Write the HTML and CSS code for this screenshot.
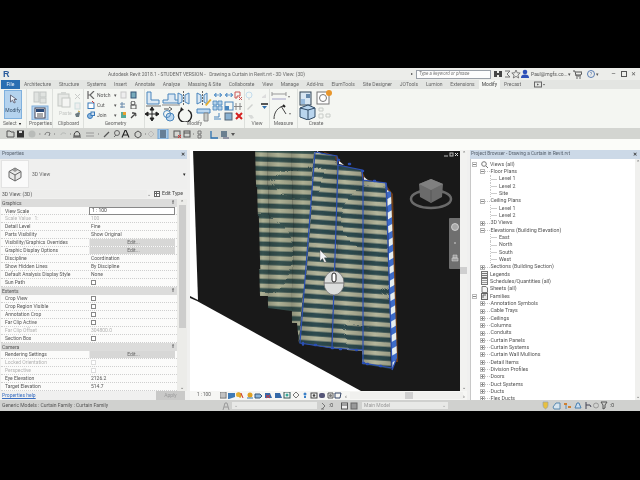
FILE: index.html
```html
<!DOCTYPE html>
<html lang="en">
<head>
<meta charset="utf-8">
<title>Autodesk Revit 2018.1</title>
<link rel="stylesheet" href="styles.css">
</head>
<body>
<div class="app">
  <header class="titlebar">
    <span class="logo">R</span>
    <span class="doc">Autodesk Revit 2018.1 - STUDENT VERSION -&nbsp;&nbsp;&nbsp;Drawing a Curtain in Revit.rvt - 3D View: (3D)</span>
    <span class="sarrow">▸</span>
    <span class="search">Type a keyword or phrase</span>
    <svg class="ticons" width="34" height="10" viewBox="0 0 34 10">
      <path d="M1 2h3v6H1zM6 2h3v6H6zM4 4h2v2H4z" fill="#444"/>
      <path d="M12 2h5l-3 3 3 3h-5" fill="none" stroke="#777"/>
      <path d="M23 1l1.200 2.800 3 .2-2.300 2 .8 3-2.700-1.600L20.300 9l.8-3-2.300-2 3-.2z" fill="none" stroke="#666" stroke-width=".8"/>
    </svg>
    <svg class="user" width="8" height="10" viewBox="0 0 8 10"><circle cx="4" cy="3" r="2.300" fill="#2d50b8"/><path d="M0 9c0-3 2-3.500 4-3.500S8 6 8 9z" fill="#2d50b8"/></svg>
    <span class="account">Paul@mgfs.co...</span><span class="caret">▾</span>
    <svg class="cart" width="9" height="9" viewBox="0 0 9 9"><path d="M0 1h2l1 5h5M3 2h6L8 5H3" fill="none" stroke="#555"/><circle cx="4" cy="8" r=".8" fill="#555"/><circle cx="7" cy="8" r=".8" fill="#555"/></svg>
    <span class="help">?</span><span class="caret">▾</span>
    <span class="winbtn min">–</span><span class="winbtn box"></span><span class="winbtn x">✕</span>
  </header>

  <nav class="tabs">
    <span class="tab file">File</span>
    <span class="tab t1">Architecture</span><span class="tab">Structure</span><span class="tab">Systems</span><span class="tab">Insert</span><span class="tab">Annotate</span><span class="tab">Analyze</span><span class="tab">Massing &amp; Site</span><span class="tab">Collaborate</span><span class="tab">View</span><span class="tab">Manage</span><span class="tab">Add-Ins</span><span class="tab">ElumTools</span><span class="tab">Site Designer</span><span class="tab">JOTools</span><span class="tab">Lumion</span><span class="tab">Extensions</span>
    <span class="tab active">Modify</span><span class="tab">Precast</span>
    <svg class="tabicon" width="11" height="7" viewBox="0 0 11 7"><rect x=".5" y="1" width="7" height="5" fill="none" stroke="#666"/><path d="M3 2.500l2 1-2 1zM9 3h2l-1 1.500z" fill="#555"/></svg>
  </nav>

  <section class="ribbon">
    <div class="group g-select">
      <div class="gbody"><div class="modifybtn">
        <svg width="9" height="10" viewBox="0 0 9 10"><path d="M1.500 1v7l2-1.800L5 9l1.300-.6L5 5.500h2.700z" fill="#e8f0f8" stroke="#556" stroke-width=".8"/></svg>
        <span>Modify</span></div></div>
      <div class="glabel">Select <b>▾</b></div>
    </div>
    <div class="group g-props">
      <div class="gbody"><svg width="22" height="30" viewBox="0 0 22 30">
        <rect x="5" y="2" width="5" height="10" fill="#e0e3e0" stroke="#c2c6c4"/><rect x="11" y="2" width="6" height="5" fill="#e0e3e0" stroke="#c2c6c4"/><rect x="11" y="8" width="6" height="5" fill="#e0e3e0" stroke="#c2c6c4"/>
        <rect x="3" y="16" width="16" height="14" fill="#b9d5ee" stroke="#80aedb"/><rect x="6" y="18" width="10" height="10" fill="#fff" stroke="#445"/><rect x="7" y="19" width="8" height="3" fill="#2a4a78"/><path d="M8 24h6M8 26h6" stroke="#555"/>
      </svg></div>
      <div class="glabel">Properties</div>
    </div>
    <div class="group g-clip">
      <div class="gbody"><svg width="29" height="30" viewBox="0 0 29 30">
        <rect x="4" y="4" width="11" height="12" fill="#e7e9e6" stroke="#c4c7c4"/><rect x="7" y="2" width="5" height="3" fill="#d4d7d4"/><rect x="8" y="8" width="8" height="9" fill="#f4f5f3" stroke="#c4c7c4"/>
        <text class="faint" x="5" y="25">Paste</text>
        <path d="M21 4l5 5M26 4l-5 5" stroke="#c8cac8"/><rect x="21" y="13" width="5" height="6" fill="#eee" stroke="#cdd"/>
        <path d="M21 24l4-2 1 1-1 4-3 0z" fill="#6b7a80"/><path d="M24 21l2 1" stroke="#c8a030"/>
      </svg></div>
      <div class="glabel">Clipboard</div>
    </div>
    <div class="group g-geo">
      <div class="geo">
        <div class="georow"><svg width="8" height="8" viewBox="0 0 8 8"><path d="M1 0v8M7 0L3 4l4 4M3 4H1" fill="none" stroke="#666" stroke-width="1.200"/></svg><span class="gt">Notch</span><span class="caret">▾</span><svg width="18" height="8" viewBox="0 0 18 8"><rect x="1" y="1" width="5" height="6" fill="#eee" stroke="#c8c8c8"/><rect x="11" y="1" width="5" height="6" fill="#7ab" stroke="#357"/></svg></div>
        <div class="georow"><svg width="8" height="8" viewBox="0 0 8 8"><rect x="1" y="2" width="6" height="5.500" fill="#fff" stroke="#3a7ab8"/><path d="M5 0l2 2" stroke="#c33"/></svg><span class="gt">Cut</span><span class="caret">▾</span><svg class="pushr" width="18" height="8" viewBox="0 0 18 8"><path d="M2 1v6M0 3h5M0 6h5" stroke="#68a"/><circle cx="13" cy="2" r="2" fill="none" stroke="#555"/><rect x="11" y="4" width="5" height="4" fill="none" stroke="#555"/></svg></div>
        <div class="georow"><svg width="8" height="8" viewBox="0 0 8 8"><circle cx="3" cy="5" r="2.500" fill="#8db8e0" stroke="#3a7ab8"/><rect x="4" y="1" width="3.500" height="3.500" fill="#cfe0f0" stroke="#3a7ab8"/></svg><span class="gt">Join</span><span class="caret">▾</span><svg class="pushr" width="18" height="8" viewBox="0 0 18 8"><path d="M1 1h5v6H1z" fill="#5a9"/><path d="M3 1h3v3H3z" fill="#e8a030"/><path d="M11 7l5-5M12 2l2 0 2 2-1 1" stroke="#444" stroke-width="1.300" fill="none"/></svg></div>
      </div>
      <div class="glabel">Geometry</div>
    </div>
    <div class="group g-mod">
      <div class="gbody"><svg width="100" height="32" viewBox="0 0 100 32">
        <path d="M2 2h4v8h8v4H2z" fill="#dbe8f3" stroke="#4a86bd"/><path d="M1 16h15" stroke="#666"/>
        <path d="M18 13h16v-3h-4V4h-7v6h-5z" fill="#dbe8f3" stroke="#4a86bd"/><path d="M17 15h18" stroke="#888"/>
        <path d="M33 3l4 2v7l-4 2zM44 3l-4 2v7l4 2z" fill="#dbe8f3" stroke="#4a86bd"/><path d="M38.500 1v15" stroke="#666" stroke-dasharray="2 1"/>
        <path d="M52 3l4 2v7l-4 2zM62 3l-3 2v7l3 2z" fill="#dbe8f3" stroke="#4a86bd"/><path d="M57.500 1v15" stroke="#666" stroke-dasharray="2 1"/><path d="M60 15l5-6 1.500 1-5 6z" fill="#e8b030"/>
        <path d="M7 18v12M1 24h12M7 17l-2 3h4zM7 31l-2-3h4zM0 24l3-2v4zM14 24l-3-2v4z" fill="#222" stroke="#222"/>
        <path d="M19 19h5M24 17l3 2-3 2" fill="none" stroke="#555"/><circle cx="25" cy="27" r="4" fill="#bcd7ef" stroke="#4a86bd"/><circle cx="22" cy="24" r="3.500" fill="none" stroke="#4a86bd"/>
        <path d="M43 20a6.500 6.500 0 1 1-6 0" fill="none" stroke="#222" stroke-width="1.400"/><path d="M36 17l3 3-4 1z" fill="#222"/>
        <path d="M52 19h13v4H52z" fill="#bcd7ef" stroke="#4a86bd"/><path d="M59 23h4v8h-4z" fill="#c9cdca" stroke="#888"/>
        <path d="M70 5h4M76 5h-1M69 5l2-2v4zM77 5l-2-2v4z" fill="#6a9ecd" stroke="#6a9ecd"/><path d="M81 5h4M87 5h-1M80 5l2-2v4zM88 5l-2-2v4z" fill="#6a9ecd" stroke="#6a9ecd"/>
        <path d="M90 2h5v4h-3v2h-2zM94 7l3 3M97 7l-3 3" stroke="#c55" fill="none"/>
        <path d="M68 11h4v4h-4zM73 11h4v4h-4zM68 16h4v4h-4zM73 16h4v4h-4z" fill="#b4d2ea" stroke="#4a86bd" stroke-width=".8"/>
        <rect x="80" y="12" width="8" height="8" fill="none" stroke="#4a86bd"/><path d="M80 16h4v4h-4z" fill="#4a86bd"/><path d="M91 13v7M95 13v7M89 16.500h8" stroke="#888"/>
        <path d="M69 27h5v-4M76 29h-7" fill="none" stroke="#4a86bd"/><rect x="80" y="23" width="7" height="7" fill="#8ab2d2" stroke="#567"/><path d="M91 23l6 6M97 23l-6 6" stroke="#d42020" stroke-width="2"/>
      </svg></div>
      <div class="glabel">Modify</div>
    </div>
    <div class="group g-view">
      <div class="gbody"><svg width="24" height="30" viewBox="0 0 24 30">
        <circle cx="4" cy="5" r="3" fill="none" stroke="#c3ddee"/><path d="M3 9h2" stroke="#ccc"/><path d="M17 7l4-3v4h-4z" fill="#ddd"/>
        <path d="M2 19l5-5 1 1-5 5z" fill="#cfd2cf"/><rect x="16" y="13" width="7" height="2" fill="#555"/><path d="M17 16h5l-2.500 3z" fill="#2f6fae"/>
        <path d="M3 25l4 0 2 3-3 1z" fill="#d9dbd9"/>
      </svg></div>
      <div class="glabel">View</div>
    </div>
    <div class="group g-meas">
      <div class="gbody"><svg width="26" height="30" viewBox="0 0 26 30">
        <path d="M2 4h14M2 2v4M16 2v4" stroke="#999"/><rect x="2" y="8" width="14" height="2" fill="#ccd"/><path d="M18 6h2l-1 2zM19 23h2l-1 2z" fill="#777"/>
        <path d="M4 29c0-7 4-12 10-13M11 16l5 8" fill="none" stroke="#444"/><path d="M13 15l2 2" stroke="#222" stroke-width="2"/>
      </svg></div>
      <div class="glabel">Measure</div>
    </div>
    <div class="group g-create">
      <div class="gbody"><svg width="36" height="30" viewBox="0 0 36 30">
        <rect x="2" y="2" width="11" height="13" fill="#d8e6f2" stroke="#345"/><rect x="8" y="4" width="4" height="4" fill="#68a"/><rect x="3" y="9" width="4" height="5" fill="#9bd"/>
        <rect x="19" y="2" width="12" height="12" fill="#fff" stroke="#777"/><circle cx="25" cy="8" r="3.500" fill="none" stroke="#777"/><circle cx="31" cy="3" r="3" fill="#e8962c"/>
        <path d="M2 18l8-3 7 3v9l-7 3-8-3z" fill="#b9d5ee" stroke="#2f4a66"/><path d="M10 20l7-2M10 20l-8-2M10 20v10" stroke="#2f4a66"/>
        <path d="M21 18h4v3h-4zM28 24h4v3h-4zM21 24h4v4h-4z" fill="none" stroke="#c8ccc8"/>
      </svg></div>
      <div class="glabel">Create</div>
    </div>
  </section>

  <div class="qat">
    <svg width="250" height="10" viewBox="0 0 250 10">
      <path d="M3 2h3l1 1h3v5H3z" fill="none" stroke="#555"/><rect x="13" y="1.500" width="7" height="7" fill="#333"/><rect x="15" y="2" width="3" height="2" fill="#ddd"/>
      <circle cx="28" cy="5" r="3.500" fill="#b9bcb9"/><path d="M35 5h1.500" stroke="#888"/><path d="M41 6c0-3 3-3 5-2l-1 3" fill="none" stroke="#777"/><path d="M50 5h1" stroke="#777"/><path d="M57 6c0-2 3-3 5-1" fill="none" stroke="#b5b8b5"/><path d="M66 5h1" stroke="#777"/>
      <path d="M70 7c0-6 6-6 6 0zM69 8h8" fill="none" stroke="#444"/><path d="M82 4h8M82 7h8" stroke="#999"/><path d="M94 5h1" stroke="#777"/>
      <path d="M100 8l5-5" stroke="#555" stroke-width="1.200"/><circle cx="113" cy="4" r="2.500" fill="none" stroke="#666"/><path d="M110 8l2-2" stroke="#666"/>
      <path d="M118 8.500l3-7h1l3 7M119.500 6h4" fill="none" stroke="#222" stroke-width="1.100"/>
      <path d="M131 4l3-2 3 2v3l-3 2-3-2z" fill="none" stroke="#555"/><path d="M141 5h1" stroke="#777"/><path d="M147 2l3 3-3 3-3-3z" fill="none" stroke="#bbb"/>
      <rect x="154" y="0" width="10" height="10" fill="#a9cbe8" stroke="#6ea2d4"/><path d="M156 2h6M156 4h6M156 6h6M156 8h6" stroke="#234"/>
      <rect x="170" y="2" width="6" height="6" fill="none" stroke="#555"/><path d="M174 6l3 3M177 6l-3 3" stroke="#d33"/><rect x="180" y="2" width="6" height="6" fill="none" stroke="#555"/><path d="M180 4h6" stroke="#555"/><path d="M189 5h1" stroke="#777"/>
      <path d="M194 2h3v3h-3zM194 6h3v3h-3z" fill="none" stroke="#777"/>
      <path d="M207 2v7h7" fill="none" stroke="#2d72b0" stroke-width="1.300"/><rect x="217" y="2" width="6" height="6" fill="#6b7f90"/><path d="M219 9h6" stroke="#557"/><path d="M227 4l4 0-2 3z" fill="#555"/>
    </svg>
  </div>
  <div class="spacer"></div>

  <main class="work">
    <aside class="props">
      <div class="phead"><span>Properties</span><b>✕</b></div>
      <div class="typebox">
        <div class="tile"><svg width="14" height="15" viewBox="0 0 14 15"><path d="M7 1l6 3.500v6L7 14l-6-3.500v-6z" fill="#e8e8e8" stroke="#666"/><path d="M1 4.500L7 8l6-3.500M7 8v6" fill="none" stroke="#666"/><path d="M4 3l3-1.500L10 3 7 5z" fill="#999"/></svg></div>
        <span>3D View</span><em>▾</em>
      </div>
      <div class="selector"><span class="selname">3D View: (3D)</span><span class="selcaret">⌄</span><svg width="6" height="6" viewBox="0 0 6 6"><rect x=".5" y=".5" width="5" height="5" fill="#fff" stroke="#666"/><path d="M.5 2.500h5M2.500 .5v5" stroke="#666"/></svg><span class="edittype">Edit Type</span></div>
      <div class="tablewrap">
        <div class="table">
          <div class="sec">Graphics<i>⇑</i></div>
          <div class="r"><span>View Scale</span><span class="input">1 : 100</span></div>
          <div class="r off"><span>Scale Value&nbsp;&nbsp;&nbsp;1:</span><span>100</span></div>
          <div class="r"><span>Detail Level</span><span>Fine</span></div>
          <div class="r"><span>Parts Visibility</span><span>Show Original</span></div>
          <div class="r"><span>Visibility/Graphics Overrides</span><span class="edit">Edit...</span></div>
          <div class="r"><span>Graphic Display Options</span><span class="edit">Edit...</span></div>
          <div class="r"><span>Discipline</span><span>Coordination</span></div>
          <div class="r"><span>Show Hidden Lines</span><span>By Discipline</span></div>
          <div class="r"><span>Default Analysis Display Style</span><span>None</span></div>
          <div class="r"><span>Sun Path</span><span><i class="cb"></i></span></div>
          <div class="sec">Extents<i>⇑</i></div>
          <div class="r"><span>Crop View</span><span><i class="cb"></i></span></div>
          <div class="r"><span>Crop Region Visible</span><span><i class="cb"></i></span></div>
          <div class="r"><span>Annotation Crop</span><span><i class="cb"></i></span></div>
          <div class="r"><span>Far Clip Active</span><span><i class="cb"></i></span></div>
          <div class="r off"><span>Far Clip Offset</span><span>304800.0</span></div>
          <div class="r"><span>Section Box</span><span><i class="cb"></i></span></div>
          <div class="sec">Camera<i>⇑</i></div>
          <div class="r"><span>Rendering Settings</span><span class="edit">Edit...</span></div>
          <div class="r off"><span>Locked Orientation</span><span><i class="cb dim"></i></span></div>
          <div class="r off"><span>Perspective</span><span><i class="cb dim"></i></span></div>
          <div class="r"><span>Eye Elevation</span><span>2126.2</span></div>
          <div class="r"><span>Target Elevation</span><span>514.7</span></div>
        </div>
        <div class="pscroll"><span class="up">⌃</span><div class="pthumb"></div><span class="down">⌄</span></div>
      </div>
      <div class="pfoot"><span class="helplink">Properties help</span><span class="apply">Apply</span></div>
    </aside>

    <div class="viewcol">
      <div class="viewrow">
        <svg class="scene" width="270" height="241" viewBox="190 150 270 241">
          <defs>
            <pattern id="st1" width="40" height="9.300" patternUnits="userSpaceOnUse" patternTransform="rotate(2)">
              <rect width="40" height="9.300" fill="#35514f"/><rect y="3.500" width="40" height="4.500" fill="#aeb195"/>
            </pattern>
            <pattern id="st2" width="40" height="9.300" patternUnits="userSpaceOnUse" patternTransform="rotate(4) translate(0 3)">
              <rect width="40" height="9.300" fill="#2e4b50"/><rect y="3.500" width="40" height="4.500" fill="#b4b69c"/>
            </pattern>
            <pattern id="side" width="10" height="12" patternUnits="userSpaceOnUse" patternTransform="rotate(-30)">
              <rect width="10" height="12" fill="#3e6cc8"/><rect y="6" width="10" height="6" fill="#e6eef0"/>
            </pattern>
            <linearGradient id="fold"><stop offset="0" stop-color="#000" stop-opacity=".2"/><stop offset=".45" stop-color="#000" stop-opacity="0"/><stop offset="1" stop-color="#000" stop-opacity=".16"/></linearGradient>
            <filter id="soft" x="-5%" y="-5%" width="110%" height="110%"><feGaussianBlur stdDeviation=".45"/></filter>
            <filter id="cloth" x="-5%" y="-5%" width="110%" height="110%">
              <feTurbulence type="fractalNoise" baseFrequency=".012 .01" numOctaves="1" seed="4" result="n"/>
              <feDisplacementMap in="SourceGraphic" in2="n" scale="7" xChannelSelector="B" yChannelSelector="G"/>
              <feGaussianBlur stdDeviation=".7"/>
            </filter>
          </defs>
          <rect x="190" y="150" width="270" height="241" fill="#191919"/>
          <path d="M190 150h3l5 150-8-4z" fill="#fff"/>
          <path d="M190 298l7 3 164 90H190z" fill="#fff"/>
          <g filter="url(#soft)">
            <path d="M322 151l16 6 4 8 20 6 4 8 20 6 7 9 5 168-3 0-4-160-8-10z" fill="#6b3a12"/>
          </g>
          <g filter="url(#cloth)">
            <path d="M256 146h12l1 150-9 0z" fill="url(#st1)"/><path d="M256 146h12l1 150-9 0z" fill="url(#fold)"/>
            <path d="M268 146h24l1 165-24-3z" fill="url(#st1)"/><path d="M268 146h24l1 165-24-3z" fill="url(#fold)"/>
            <path d="M292 146h24l-16 197-2-20-5 0z" fill="url(#st1)"/><path d="M292 146h24l-16 197-2-20-5 0z" fill="url(#fold)"/>
            <path d="M315 152l22 4 1 9-6 183-32-5z" fill="url(#st2)"/><path d="M315 152l22 4 1 9-6 183-32-5z" fill="url(#fold)"/>
            <path d="M338 165l24 5 1 10 0 170-31-2z" fill="url(#st2)"/><path d="M338 165l24 5 1 10 0 170-31-2z" fill="url(#fold)"/>
            <path d="M363 180l23 3 6 185-29-5z" fill="url(#st2)"/><path d="M363 180l23 3 6 185-29-5z" fill="url(#fold)"/>
          </g>
          <path d="M190 150h270v1H190z" fill="#fff"/>
          <g filter="url(#soft)">
            <path d="M387 190l4 2 6 166-5 11z" fill="url(#side)"/>
            <path d="M317 151l5 3-5-1zM339 161l5 4-5-1zM364 177l5 4-5-1z" fill="#e8edf2"/>
            <path d="M315 152l22 4 1 9 24 5 1 10 23 3 6 185M315 152l-15 191 32 5 31 2M338 165l-6 183M363 180v183l29 5" fill="none" stroke="#2b4fb4" stroke-width="1.200"/>
            <path d="M386 183l1 7" stroke="#2b4fb4" stroke-width="1.500"/>
            <path d="M303 343l0 1.500M315 345h1M340 349h1M356 350h1M367 364h1M380 366h1M338 160h1M349 164h1M362 171h1M374 181h1M332 348h1M363 363h1" stroke="#2b4fb4" stroke-width="2.500" stroke-linecap="round"/>
            <path d="M392 370l4-10" stroke="#2b4fb4" stroke-width="1.300"/>
          </g>
          <!-- mouse wheel hint -->
          <ellipse cx="334" cy="283" rx="10" ry="12" fill="#dcdedd" stroke="#666" stroke-width=".7"/>
          <path d="M324 283h20" stroke="#555" stroke-width=".8"/>
          <rect x="332" y="273" width="4" height="9" rx="2" fill="#fff" stroke="#222"/>
          <!-- pointer -->
          <path d="M320 250v11l2.500-2.500 2 4 1.800-.8-2-3.900h3.200z" fill="#f4f6f8" stroke="#555" stroke-width=".4"/>
          <!-- view cube -->
          <ellipse cx="431" cy="199" rx="20" ry="9" fill="none" stroke="#6a6a6a" stroke-width="2.500"/>
          <path d="M431 179l12 5-1 13-11 6-11-6-1-13z" fill="#6b6b6b"/>
          <path d="M419 184l12 6 12-6-12-5z" fill="#808080"/><path d="M431 190v13" stroke="#595959"/>
          <!-- nav wheel -->
          <rect x="449" y="218" width="12" height="51" rx="1" fill="#6f6f6f"/>
          <circle cx="455" cy="227" r="3.500" fill="#a9a9a9" stroke="#ddd" stroke-width=".8"/>
          <circle cx="455" cy="243" r=".8" fill="#ddd"/>
          <path d="M452 258h6v3h-6zM453 255h4v3h-4z" fill="#9a9a9a" stroke="#ddd" stroke-width=".5"/>
          <!-- window buttons -->
          <path d="M444 156h4" stroke="#bbb"/><rect x="450" y="153" width="3" height="3" fill="none" stroke="#bbb"/><path d="M455 153l3 3M458 153l-3 3" stroke="#ddd"/>
        </svg>
        <div class="vscroll"><span class="up">⌃</span><div class="vthumb"></div><span class="down">⌄</span></div>
      </div>
      <div class="viewbar">
        <span class="scale">1 : 100</span>
        <svg class="vicons" width="122" height="7" viewBox="0 0 122 7">
          <rect x="0" y="0" width="6" height="6" fill="#fff" stroke="#666"/><path d="M0 2h6M0 4h6M2 0v6M4 0v6" stroke="#888" stroke-width=".6"/>
          <path d="M8 1h7v4l-6 2H8z" fill="#3f7ab5"/><path d="M16 2a3 3 0 1 1 4 4zM19 5l3 1" fill="#e0a020"/><circle cx="18" cy="3" r="2" fill="#e6b030"/><path d="M21 1l2 5" stroke="#c33"/>
          <circle cx="30" cy="3" r="2.500" fill="#e0a020"/><path d="M27 6h6" stroke="#37a"/><path d="M35 2h5l2 2-2 2h-5z" fill="#8ab4da" stroke="#357"/><path d="M45 1h5l2 5h-7z" fill="#3468a8"/><path d="M46 3l4 3M50 3l-4 3" stroke="#d33"/>
          <path d="M55 1h5l2 5h-7z" fill="#3468a8"/><rect x="64" y="0" width="6" height="6" fill="none" stroke="#355"/><circle cx="67" cy="3" r="1.500" fill="#3a9"/>
          <path d="M73 3l3-3 3 3-3 3z" fill="none" stroke="#777"/><circle cx="85" cy="2" r="1.500" fill="#3a80c8"/><path d="M84 4h2v2h-2z" fill="#3a80c8"/>
          <rect x="91" y="1" width="6" height="5" fill="none" stroke="#444"/><circle cx="94" cy="3.500" r="1.300" fill="#444"/><rect x="99" y="1" width="6" height="5" rx="2" fill="#557"/><path d="M108 1h5v5h-5z" fill="none" stroke="#555"/><circle cx="110.500" cy="3.500" r="1.500" fill="#777"/><path d="M115 1h6l-1 5h-5z" fill="none" stroke="#346"/>
        </svg>
        <span class="lt">‹</span>
        <div class="hscroll"><div class="hthumb"></div></div>
        <span class="rt">›</span>
      </div>
    </div>

    <aside class="browser">
      <div class="phead bhead"><span>Project Browser - Drawing a Curtain in Revit.rvt</span><b>✕</b></div>
      <div class="treewrap">
        <div class="tree">
          <div class="n"><i class="ex m"></i><svg class="ti" width="7" height="7" viewBox="0 0 7 7"><circle cx="3" cy="3" r="2.300" fill="none" stroke="#777"/><path d="M5 5l2 2" stroke="#777"/></svg>Views (all)</div>
          <div class="n p"><i class="ex m"></i><u></u>Floor Plans</div>
          <div class="n l"><u></u>Level 1</div>
          <div class="n l"><u></u>Level 2</div>
          <div class="n l"><u></u>Site</div>
          <div class="n p"><i class="ex m"></i><u></u>Ceiling Plans</div>
          <div class="n l"><u></u>Level 1</div>
          <div class="n l"><u></u>Level 2</div>
          <div class="n p"><i class="ex"></i><u></u>3D Views</div>
          <div class="n p"><i class="ex m"></i><u></u>Elevations (Building Elevation)</div>
          <div class="n l"><u></u>East</div>
          <div class="n l"><u></u>North</div>
          <div class="n l"><u></u>South</div>
          <div class="n l"><u></u>West</div>
          <div class="n p"><i class="ex"></i><u></u>Sections (Building Section)</div>
          <div class="n t"><svg class="ti" width="7" height="7" viewBox="0 0 7 7"><rect x=".5" y=".5" width="6" height="6" fill="#f2f2f2" stroke="#777"/><path d="M1 2.500h5M1 4.500h5" stroke="#777"/></svg>Legends</div>
          <div class="n t"><svg class="ti" width="7" height="7" viewBox="0 0 7 7"><rect x=".5" y=".5" width="6" height="6" fill="#f2f2f2" stroke="#777"/><path d="M1 2.500h5M1 4.500h5" stroke="#999"/></svg>Schedules/Quantities (all)</div>
          <div class="n t"><svg class="ti" width="7" height="7" viewBox="0 0 7 7"><path d="M1 .5h4l1.500 1.500v4.500H1z" fill="#f6f6f6" stroke="#777"/></svg>Sheets (all)</div>
          <div class="n"><i class="ex m"></i><svg class="ti" width="7" height="7" viewBox="0 0 7 7"><rect x=".5" y=".5" width="6" height="6" fill="#e8e8e8" stroke="#666"/><path d="M2 5V2h3" fill="none" stroke="#666"/></svg>Families</div>
          <div class="n p"><i class="ex"></i><u></u>Annotation Symbols</div>
          <div class="n p"><i class="ex"></i><u></u>Cable Trays</div>
          <div class="n p"><i class="ex"></i><u></u>Ceilings</div>
          <div class="n p"><i class="ex"></i><u></u>Columns</div>
          <div class="n p"><i class="ex"></i><u></u>Conduits</div>
          <div class="n p"><i class="ex"></i><u></u>Curtain Panels</div>
          <div class="n p"><i class="ex"></i><u></u>Curtain Systems</div>
          <div class="n p"><i class="ex"></i><u></u>Curtain Wall Mullions</div>
          <div class="n p"><i class="ex"></i><u></u>Detail Items</div>
          <div class="n p"><i class="ex"></i><u></u>Division Profiles</div>
          <div class="n p"><i class="ex"></i><u></u>Doors</div>
          <div class="n p"><i class="ex"></i><u></u>Duct Systems</div>
          <div class="n p"><i class="ex"></i><u></u>Ducts</div>
          <div class="n p"><i class="ex"></i><u></u>Flex Ducts</div>
        </div>
        <div class="bscroll"><span class="up">⌃</span><span class="down">⌄</span></div>
      </div>
    </aside>
  </main>

  <footer class="status">
    <span class="stext">Generic Models : Curtain Family : Curtain Family</span>
    <svg class="sicon" width="8" height="8" viewBox="0 0 8 8"><path d="M1 8l2-7h2l2 7M2 5h4" fill="none" stroke="#9a9a9a"/></svg>
    <span class="combo c1"><em>⌄</em></span>
    <svg class="sic2" width="9" height="8" viewBox="0 0 9 8"><path d="M2 1l3 3-3 3M1 7h3" fill="none" stroke="#777"/></svg><span class="zero">:0</span>
    <svg class="sic3" width="18" height="8" viewBox="0 0 18 8"><rect x=".5" y="1" width="6" height="6" fill="#eee" stroke="#555"/><path d="M1 3h5" stroke="#555"/><rect x="10" y="1" width="6" height="6" fill="#999" stroke="#666"/></svg>
    <span class="combo c2">Main Model<em>⌄</em></span>
    <svg class="sic4" width="68" height="9" viewBox="0 0 68 9">
      <path d="M1 1h5v3c0 2-1 3-2.500 4C2 7 1 6 1 4z" fill="#e8c040" stroke="#8a9ab0" stroke-width=".6"/>
      <path d="M11 6l3-4h4v6h-6z" fill="#d6e4ee" stroke="#5a8ab0"/>
      <path d="M22 2h3v2h-3zM26 5h3v2h-3z" fill="#d08030"/><path d="M24 4v4" stroke="#5a8ab0"/>
      <path d="M33 7l2-5h2l2 5z" fill="#c8dcee" stroke="#4a80b0"/>
      <path d="M44 1v7M44 4h4l1 2" fill="none" stroke="#445"/>
      <circle cx="54" cy="4.500" r="2.500" fill="none" stroke="#999"/>
      <path d="M59 1h6l-2 3v3l-2 1V4z" fill="none" stroke="#555"/>
    </svg>
    <span class="zero">:0</span>
  </footer>
</div>
</body>
</html>
```

FILE: styles.css
```css
* { box-sizing: border-box; }
html, body { margin: 0; padding: 0; background: #000; overflow: hidden; }
body { height: 480px; }
.app {
  width: 640px; height: 343px; margin-top: 68px; background: #f4f6f2;
  font: 5px/1 Roboto, "Open Sans", sans-serif; color: #555;
  display: flex; flex-direction: column; filter: blur(.35px); overflow: hidden;
}
.app svg { display: block; flex: none; }
.caret { font-size: 5px; color: #555; flex: none; }

.titlebar { height: 12px; flex: none; background: #ecedea; display: flex; align-items: center; }
.titlebar > * { flex: none; }
.logo { font: bold 9px "Liberation Sans", sans-serif; color: #2b5c9c; margin-left: 3px; width: 105px; }
.doc { width: 305px; color: #666; white-space: nowrap; font-size: 4.9px; }
.sarrow { font-size: 4px; width: 4px; color: #444; margin-left: -2px; }
.search { width: 75px; height: 9px; background: #fdfdfd; border: 1px solid #9aa0a8; font-size: 4.6px; font-style: italic; color: #777; padding: 1px 0 0 2px; margin-left: 1px; }
.ticons { margin-left: 2px; }
.user { margin-left: -6px; }
.account { margin-left: 2px; color: #555; width: 37px; white-space: nowrap; font-size: 5px; }
.caret { width: 4px; }
.cart { margin-left: 1px; }
.help { width: 8px; height: 8px; border: 1px solid #5a7eb4; border-radius: 50%; margin-left: 5px; margin-right: 1px; font-size: 5px; text-align: center; color: #4a6ea8; line-height: 6px; }
.winbtn { color: #555; font-size: 7px; width: 7px; text-align: center; }
.min { margin-left: 10px; }
.box { height: 6px; width: 6px; border: 1px solid #555; margin-left: 4px; }
.x { margin-left: 3px; font-size: 6px; }

.tabs { height: 9px; flex: none; background: #e3e5e2; display: flex; align-items: center; white-space: nowrap; }
.tab { color: #666; margin-left: 7.800px; font-size: 5px; flex: none; }
.file { background: #2a6fb2; color: #e8f0f8; width: 19px; height: 9px; line-height: 9px; text-align: center; margin-left: 1px; }
.t1 { margin-left: 4px; }
.active { background: #f4f6f2; color: #444; height: 9px; line-height: 9px; padding: 0 3px; margin-left: 4px; }
.active + .tab { margin-left: 4px; }
.tabicon { margin-left: 13px; }

.ribbon { height: 39px; flex: none; background: #f4f6f2; display: flex; }
.group { display: flex; flex-direction: column; border-right: 1px solid #dde0dc; height: 39px; flex: none; }
.gbody, .geo { height: 31px; flex: none; padding-top: 1px; }
.glabel { text-align: center; font-size: 5px; color: #666; height: 8px; line-height: 7px; white-space: nowrap; }
.glabel b { font-size: 4px; color: #222; margin-left: 1px; }
.g-select { width: 27px; padding-left: 4px; }
.g-select .glabel { text-align: left; margin-left: -1px; }
.g-props { width: 26px; padding-left: 2px; }
.g-clip { width: 31px; padding-left: 1px; }
.g-geo { width: 61px; padding-left: 3px; }
.g-mod { width: 100px; }
.g-view { width: 25px; }
.g-meas { width: 28px; }
.g-create { width: 36px; border-right: 0; }
.modifybtn { width: 18px; height: 29px; background: #b4d3ee; border: 1px solid #7fb1de; display: flex; flex-direction: column; align-items: center; justify-content: space-between; padding: 3px 0 5px; color: #35506a; }
.faint { font: 5px Roboto, sans-serif; fill: #c4c7c4; }
.georow { display: flex; align-items: center; height: 10px; }
.gt { width: 17px; margin-left: 2px; color: #555; }
.georow .caret { width: 6px; }

.qat { height: 11px; flex: none; background: #d3d5d1; padding: 1px 0 0 4px; }
.spacer { height: 11px; flex: none; background: #fbfcf9; }

.work { height: 250px; flex: none; display: flex; background: #f0f0ef; }
.phead { height: 9px; flex: none; background: #ccd9e7; display: flex; justify-content: space-between; align-items: center; padding: 0 2px; color: #56606c; font-size: 4.8px; }
.phead b { font-size: 5px; color: #333; }

.props { width: 187px; flex: none; display: flex; flex-direction: column; background: #f0f0ef; margin-right: 3px; }
.typebox { height: 30px; flex: none; display: flex; align-items: center; background: #efefee; color: #666; }
.tile { width: 28px; height: 28px; margin-left: 1px; background: #fafafa; border: 1px solid #e3e3e3; display: flex; align-items: center; justify-content: center; }
.typebox span { margin-left: 3px; flex: 1; }
.typebox em { font-style: normal; font-size: 5px; color: #222; margin-right: 1px; }
.selector { height: 10px; flex: none; display: flex; align-items: center; color: #555; background: #f0f0ef; }
.selname { width: 147px; background: #ededec; height: 8px; line-height: 8px; padding-left: 2px; }
.selcaret { width: 7px; color: #777; }
.edittype { margin-left: 2px; font-size: 5.2px; color: #444; }
.tablewrap { height: 192px; flex: none; display: flex; }
.table { width: 176px; margin-left: 1px; flex: none; }
.sec { height: 8px; background: #dcdcdb; color: #555; display: flex; justify-content: space-between; align-items: center; padding: 0 2px 0 1px; }
.sec i { font-style: normal; font-size: 4.5px; color: #333; }
.r { height: 8px; display: grid; grid-template-columns: 88px 86px; align-items: center; background: #fbfbfa; border-bottom: 1px dotted #cfcfcf; color: #555; }
.r > span:first-child { padding-left: 4px; white-space: nowrap; }
.r > span:last-child { padding-left: 2px; height: 7px; line-height: 7px; }
.off { color: #b3b3b3; }
.input { border: 1px solid #888; background: #fff; color: #444; line-height: 5px !important; height: 8px !important; }
.edit { background: #d7d7d6; text-align: center; color: #666; border-left: 1px solid #e8e8e8; }
.cb { display: block; width: 5px; height: 5px; border: 1px solid #888; background: #fff; margin-top: 1px; }
.dim { border-color: #ddd; }
.pscroll { width: 10px; flex: none; background: #ecece9; display: flex; flex-direction: column; align-items: center; color: #555; font-size: 5px; }
.up { height: 6px; line-height: 7px; flex: none; }
.pthumb { width: 7px; height: 123px; background: #cdcdcc; flex: none; }
.down { margin-top: auto; height: 6px; flex: none; }
.pfoot { height: 9px; flex: none; display: flex; justify-content: space-between; align-items: center; background: #f0f0ef; }
.helplink { color: #3a6fc2; text-decoration: underline; margin-left: 2px; }
.apply { width: 29px; height: 9px; background: #c9c9c8; color: #9a9a9a; text-align: center; line-height: 9px; margin-right: 2px; }

.viewcol { width: 277px; flex: none; display: flex; flex-direction: column; margin-right: 3px; background: #fff; }
.viewrow { height: 241px; flex: none; display: flex; }
.vscroll { width: 7px; flex: none; background: #f2f2f0; display: flex; flex-direction: column; align-items: center; font-size: 5px; color: #555; }
.vthumb { width: 7px; height: 7px; background: #cfcfcf; margin-top: 111px; flex: none; }
.viewbar { height: 9px; flex: none; display: flex; align-items: center; background: #f6f6f4; color: #555; padding-left: 7px; }
.scale { width: 23px; font-size: 4.6px; flex: none; }
.vicons { margin-right: 3px; }
.lt, .rt { font-size: 6px; width: 5px; color: #333; flex: none; }
.hscroll { width: 113px; height: 7px; flex: none; background: #f0f0ee; padding-left: 55px; }
.hthumb { width: 8px; height: 7px; background: #cfcfcf; }

.browser { width: 170px; flex: none; display: flex; flex-direction: column; }
.bhead { padding-left: 1px; padding-right: 3px; }
.treewrap { height: 241px; flex: none; display: flex; background: #fff; border-left: 1px solid #c8c8c8; overflow: hidden; }
.tree { width: 164px; flex: none; padding-top: 1.800px; }
.n { height: 7.333px; display: flex; align-items: center; color: #555; white-space: nowrap; font-size: 5.3px; }
.ex { width: 5px; height: 5px; border: 1px solid #bbb; flex: none; background: linear-gradient(#888,#888) center/3px 1px no-repeat, linear-gradient(#888,#888) center/1px 3px no-repeat; margin-left: 1px; }
.ex.m { background: linear-gradient(#888,#888) center/3px 1px no-repeat; }
.ti { margin: 0 2px 0 4px; }
.n u { width: 5px; height: 0; border-top: 1px dotted #c8c8c8; flex: none; margin-right: 1px; }
.p { padding-left: 7.500px; }
.l { padding-left: 19px; }
.l u { width: 7px; height: 7.333px; border-top: 0; border-left: 1px dotted #c8c8c8; background: linear-gradient(#ccc,#ccc) left center/7px 1px no-repeat; margin-right: 2px; }
.t { padding-left: 6px; }
.t .ti { margin-left: 4px; }
.bscroll { width: 5px; flex: none; background: #f0f0ee; display: flex; flex-direction: column; align-items: center; font-size: 5px; color: #555; }

.status { height: 11px; flex: none; background: #d0d1cf; display: flex; align-items: center; color: #555; }
.status > * { flex: none; }
.stext { width: 222px; padding-left: 2px; white-space: nowrap; font-size: 5px; }
.sicon { margin-right: 2px; }
.combo { height: 7px; line-height: 7px; background: #e8e9e7; display: flex; justify-content: space-between; color: #9a9a9a; padding: 0 2px; font-style: normal; font-size: 5px; }
.combo em { font-style: normal; }
.c1 { width: 85px; }
.c2 { width: 86px; margin-left: 3px; }
.sic2 { margin-left: 3px; }
.zero { font-size: 5px; color: #444; }
.sic3 { margin-left: 8px; }
.sic4 { margin-left: 94px; }
```
